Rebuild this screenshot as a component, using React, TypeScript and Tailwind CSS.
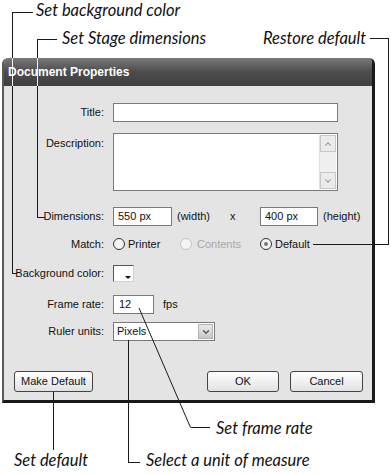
import { ChevronDown, ChevronUp } from "lucide-react";

function Label({ children, top }: { children: React.ReactNode; top?: boolean }) {
  return (
    <div className={`w-[100px] shrink-0 text-right ${top ? "self-start pt-[2px]" : ""}`}>
      {children}
    </div>
  );
}

function Radio({ checked, disabled }: { checked?: boolean; disabled?: boolean }) {
  return (
    <span
      className={`w-[12px] h-[12px] rounded-full border bg-[#f4f4f4] flex items-center justify-center ${
        disabled ? "border-[#c4c4c4]" : "border-[#333]"
      }`}
    >
      {checked && <span className="w-[4px] h-[4px] rounded-full bg-[#777]" />}
    </span>
  );
}

function Button({ children, className }: { children: React.ReactNode; className: string }) {
  return (
    <button
      className={`h-[21px] rounded-[3px] border border-[#444] bg-gradient-to-b from-white to-[#e2e2e2] text-[11px] text-[#111] flex items-center justify-center ${className}`}
    >
      {children}
    </button>
  );
}

function Notes() {
  const note = "absolute font-['Lato',sans-serif] italic text-[16.5px] leading-[20px] text-[#111] whitespace-nowrap";
  return (
    <>
      <div className={`${note} left-[36px] top-[0px]`}>Set background color</div>
      <div className={`${note} left-[62px] top-[28px]`}>Set Stage dimensions</div>
      <div className={`${note} left-[263px] top-[28px]`}>Restore default</div>
      <div className={`${note} left-[216px] top-[418px]`}>Set frame rate</div>
      <div className={`${note} left-[14px] top-[450px]`}>Set default</div>
      <div className={`${note} left-[146px] top-[450px]`}>Select a unit of measure</div>
      <svg className="absolute inset-0 pointer-events-none" width="391" height="474" shapeRendering="crispEdges">
        <g stroke="#1a1a1a" strokeWidth="1" fill="none">
          <path d="M32.5 12.5H12.5V273.5H17" />
          <path d="M56.5 39.5H37.5V217.5H45" />
          <path d="M370 38.5H388.5V244.5H313" />
          <path d="M53.5 392V450" />
          <path d="M128.5 340V462.5H140" />
          <path d="M210 427.5H190.5" />
        </g>
        <g stroke="#f2f2f2" strokeWidth="1">
          <path d="M12.5 58V86" />
          <path d="M37.5 58V86" />
        </g>
        <path d="M139 308L190.5 427.5" stroke="#1a1a1a" strokeWidth="1" shapeRendering="geometricPrecision" />
      </svg>
    </>
  );
}

export default function App() {
  return (
    <div className="relative w-[391px] h-[474px] bg-white overflow-hidden pt-[58px] pl-[2px] font-['Liberation_Sans',Arial,sans-serif] text-[11px] text-[#111]">
      <div className="w-[373px] flex flex-col rounded-t-[6px] overflow-hidden border-l-2 border-l-[#5a5a5a] border-r-[3px] border-r-[#1a1a1a] border-b-[3px] border-b-[#1a1a1a] bg-[#e4e4e4]">
        <div className="h-[28px] flex items-center pl-[4px] bg-gradient-to-b from-[#7a7a7a] via-[#4c4c4c] to-[#3f3f3f] text-white font-bold text-[12px]">
          Document Properties
        </div>
        <div className="flex flex-col pt-[17px] pb-[8px]">
          <div className="flex items-center h-[19px]">
            <Label>Title:</Label>
            <div className="ml-[9px] w-[225px] h-[19px] border border-[#7a7a7a] bg-white" />
          </div>

          <div className="flex mt-[11px]">
            <Label top>Description:</Label>
            <div className="ml-[9px] w-[225px] h-[58px] border border-[#7a7a7a] bg-white flex justify-end p-[1px]">
              <div className="w-[17px] flex flex-col justify-between bg-[#f0f0f0] border-l border-[#e0e0e0]">
                <div className="h-[17px] border border-[#c8c8c8] bg-[#ececec] flex items-center justify-center text-[#888]">
                  <ChevronUp size={10} strokeWidth={2.5} />
                </div>
                <div className="h-[17px] border border-[#c8c8c8] bg-[#ececec] flex items-center justify-center text-[#888]">
                  <ChevronDown size={10} strokeWidth={2.5} />
                </div>
              </div>
            </div>
          </div>

          <div className="flex items-center h-[19px] mt-[16px]">
            <Label>Dimensions:</Label>
            <div className="ml-[9px] w-[59px] h-[19px] border border-[#7a7a7a] bg-white flex items-center pl-[4px]">550 px</div>
            <span className="ml-[5px] w-[53px]">(width)</span>
            <span className="w-[30px]">x</span>
            <div className="w-[58px] h-[19px] border border-[#7a7a7a] bg-white flex items-center pl-[4px]">400 px</div>
            <span className="ml-[5px]">(height)</span>
          </div>

          <div className="flex items-center h-[18px] mt-[9px]">
            <Label>Match:</Label>
            <div className="ml-[9px] w-[67px] flex items-center gap-[3px]">
              <Radio />
              <span>Printer</span>
            </div>
            <div className="w-[80px] flex items-center gap-[5px] text-[#a8a8a8]">
              <Radio disabled />
              <span>Contents</span>
            </div>
            <div className="flex items-center gap-[3px]">
              <Radio checked />
              <span>Default</span>
            </div>
          </div>

          <div className="flex items-center h-[18px] mt-[11px]">
            <Label>Background color:</Label>
            <div className="relative ml-[9px] w-[21px] h-[17px] bg-white border border-[#555] border-r-[#cfcfcf] border-b-[#cfcfcf]">
              <span className="absolute right-[2px] bottom-[2px] w-0 h-0 border-l-[3px] border-r-[3px] border-t-[3px] border-l-transparent border-r-transparent border-t-[#111]" />
            </div>
          </div>

          <div className="flex items-center h-[19px] mt-[13px]">
            <Label>Frame rate:</Label>
            <div className="ml-[9px] w-[41px] h-[19px] border border-[#7a7a7a] bg-white flex items-center pl-[5px]">12</div>
            <span className="ml-[9px]">fps</span>
          </div>

          <div className="flex items-center h-[19px] mt-[8px]">
            <Label>Ruler units:</Label>
            <div className="ml-[9px] w-[102px] h-[19px] border border-[#7a7a7a] bg-white flex items-center justify-between pl-[3px] pr-[1px]">
              <span>Pixels</span>
              <span className="w-[15px] h-[15px] border border-[#b4b4b4] bg-gradient-to-b from-[#e8e8e8] to-[#c8c8c8] flex items-center justify-center text-[#555]">
                <ChevronDown size={10} strokeWidth={3} />
              </span>
            </div>
          </div>

          <div className="flex items-center mt-[30px]">
            <Button className="ml-[10px] w-[79px]">Make Default</Button>
            <Button className="ml-auto w-[72px]">OK</Button>
            <Button className="ml-[11px] mr-[9px] w-[73px]">Cancel</Button>
          </div>
        </div>
      </div>
      <Notes />
    </div>
  );
}
